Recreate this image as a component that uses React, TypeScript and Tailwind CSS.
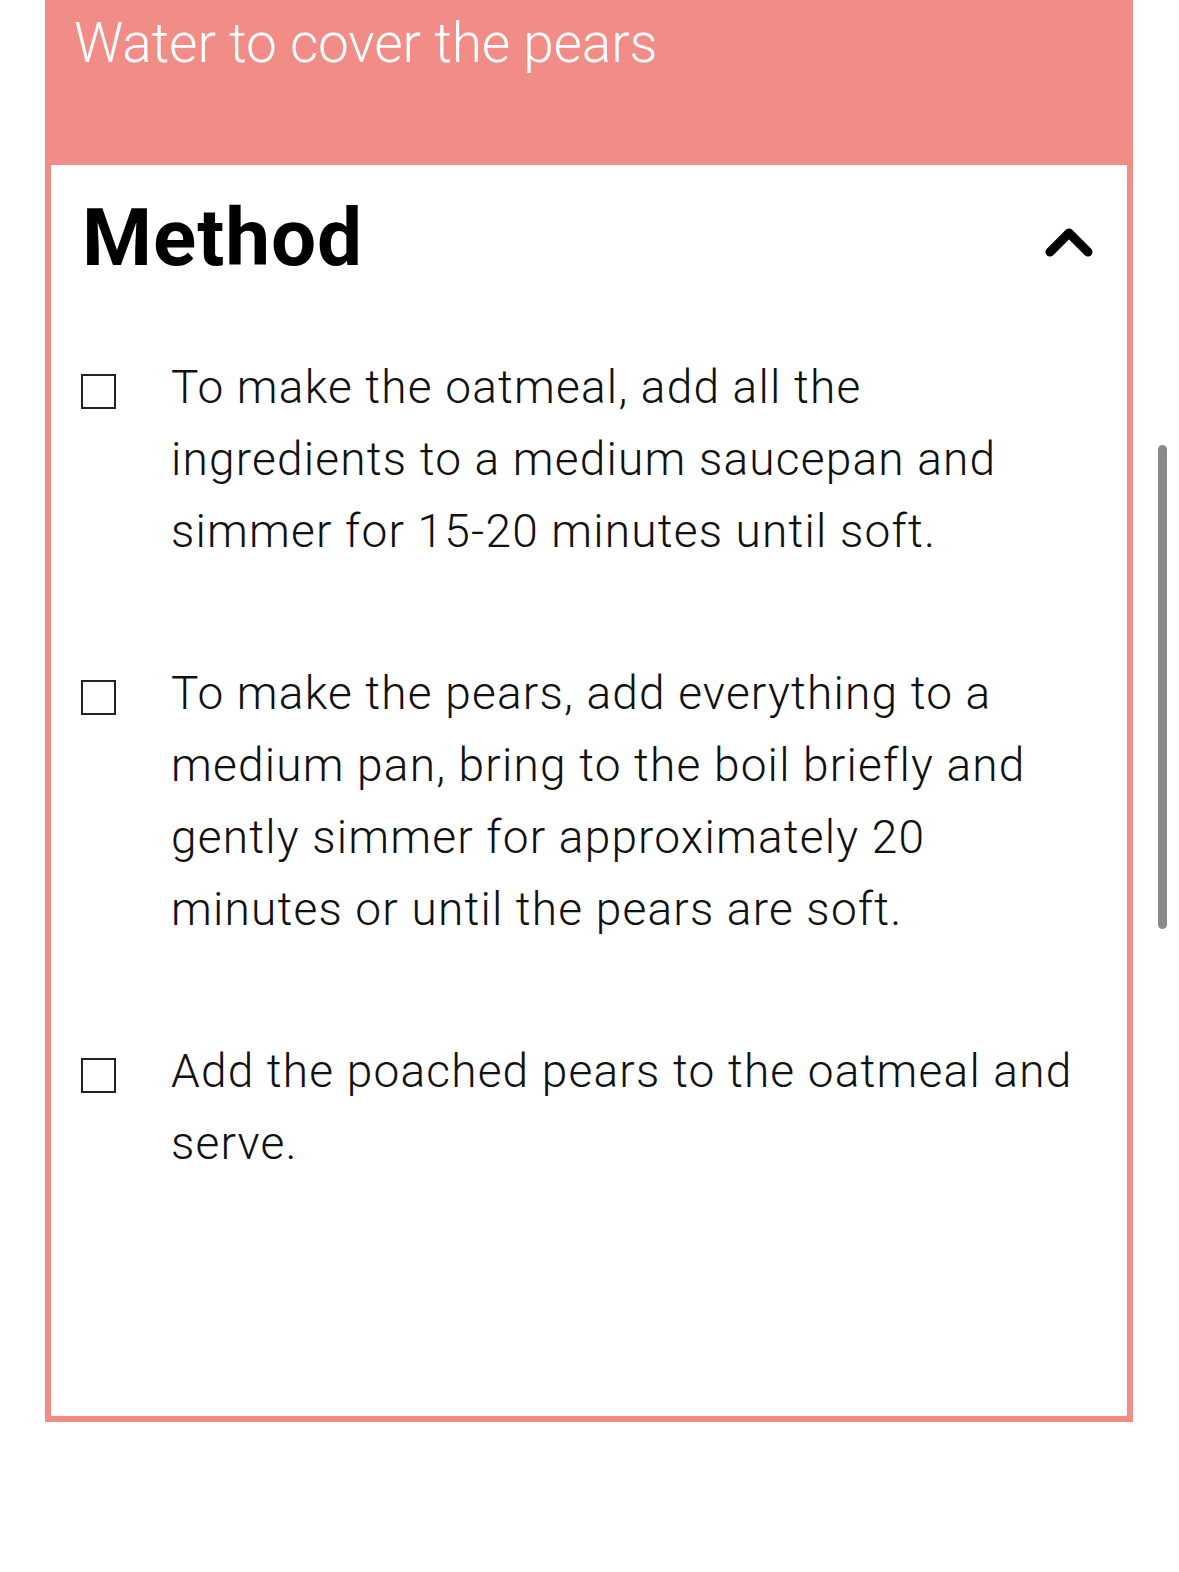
import React from "react";

const items: string[][] = [
  ["To make the oatmeal, add all the", "ingredients to a medium saucepan and", "simmer for 15-20 minutes until soft."],
  ["To make the pears, add everything to a", "medium pan, bring to the boil briefly and", "gently simmer for approximately 20", "minutes or until the pears are soft."],
  ["Add the poached pears to the oatmeal and", "serve."],
];

export default function App() {
  return (
    <div className="relative w-[1179px] h-[1572px] bg-white overflow-hidden" style={{ fontFamily: "Roboto, 'Noto Sans', sans-serif" }}>
      <div className="ml-[45px] w-[1088px] bg-[#f18c87]">
        <div className="h-[165px] pl-[29px] pt-[16px]">
          <div className="text-[55px] leading-none font-light text-white tracking-[-0.003em]">Water to cover the pears</div>
        </div>
        <div className="mx-[6px] pb-[6px]">
          <div className="bg-white h-[1251px] pl-[31px] pr-[34px]">
            <div className="flex items-center justify-between pt-[33px] h-[113px]">
              <h2 className="text-[80px] leading-none font-bold text-black tracking-[0.012em]">Method</h2>
              <svg width="48" height="34" viewBox="0 0 48 34" className="mt-[6px]">
                <path d="M5 28 L24 9 L43 28" fill="none" stroke="#000" strokeWidth="9" strokeLinecap="round" strokeLinejoin="round" />
              </svg>
            </div>
            <ul className="mt-[73px] flex flex-col gap-[90px]">
              {items.map((lines, i) => (
                <li key={i} className="flex items-start">
                  <span className="mt-[23px] -ml-px w-[35px] h-[35px] border-2 border-[#222] shrink-0" />
                  <p className="ml-[55px] text-[46px] leading-[72px] font-light text-[#111] tracking-[0.026em] whitespace-nowrap">
                    {lines.map((l, j) => (
                      <span key={j} className="block">{l}</span>
                    ))}
                  </p>
                </li>
              ))}
            </ul>
          </div>
        </div>
      </div>
      <div className="absolute left-[1158px] top-[445px] w-[9px] h-[484px] rounded-full bg-[#8a8a8a]" />
    </div>
  );
}
